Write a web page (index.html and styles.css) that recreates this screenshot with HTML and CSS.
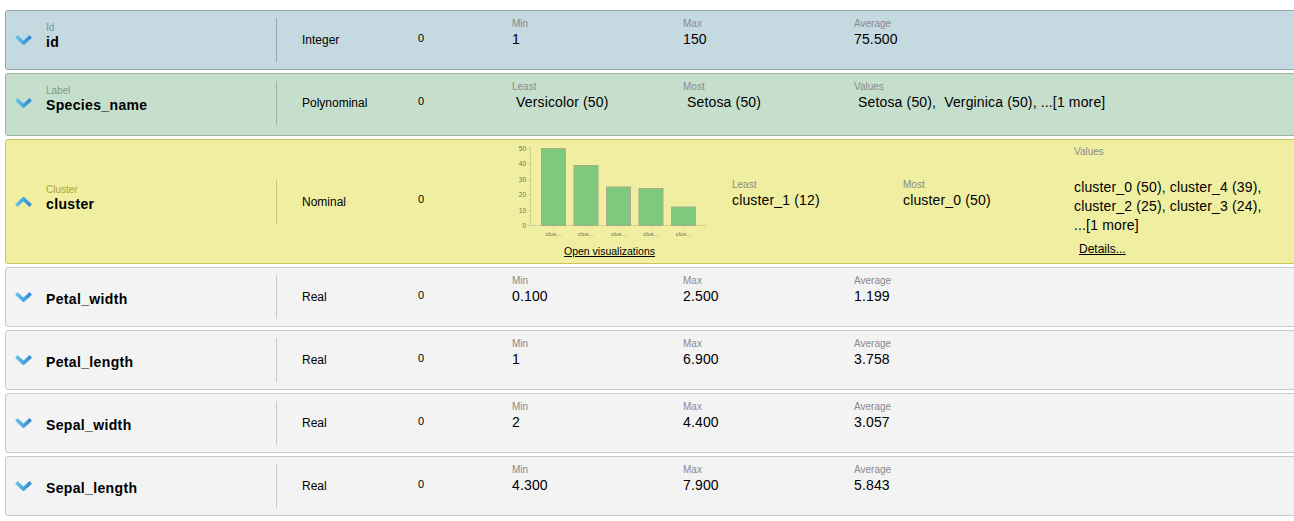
FILE: index.html
```html
<!DOCTYPE html>
<html>
<head>
<meta charset="utf-8">
<title>Attributes</title>
<link rel="stylesheet" href="styles.css">
</head>
<body>
<svg width="0" height="0" class="defs">
  <defs>
    <linearGradient id="chev" x1="0" y1="0" x2="1" y2="0">
      <stop offset="0" stop-color="#6cc0ea"/>
      <stop offset="0.5" stop-color="#45a6de"/>
      <stop offset="1" stop-color="#2a8bd0"/>
    </linearGradient>
  </defs>
</svg>
<div class="list">

  <div class="row row-id">
    <div class="toggle"><svg width="17" height="10" viewBox="0 0 17 10"><path d="M1.3 1.4 L8.5 8 L15.7 1.4" fill="none" stroke="url(#chev)" stroke-width="3.6"/></svg></div>
    <div class="name"><div class="role">Id</div><div class="title">id</div></div>
    <div class="sep"></div>
    <div class="type">Integer</div>
    <div class="missing">0</div>
    <div class="stat"><div class="slabel">Min</div><div class="sval">1</div></div>
    <div class="stat"><div class="slabel">Max</div><div class="sval">150</div></div>
    <div class="stat"><div class="slabel">Average</div><div class="sval">75.500</div></div>
  </div>

  <div class="row row-label">
    <div class="toggle"><svg width="17" height="10" viewBox="0 0 17 10"><path d="M1.3 1.4 L8.5 8 L15.7 1.4" fill="none" stroke="url(#chev)" stroke-width="3.6"/></svg></div>
    <div class="name"><div class="role">Label</div><div class="title">Species_name</div></div>
    <div class="sep"></div>
    <div class="type">Polynominal</div>
    <div class="missing">0</div>
    <div class="stat"><div class="slabel">Least</div><div class="sval pre"> Versicolor (50)</div></div>
    <div class="stat"><div class="slabel">Most</div><div class="sval pre"> Setosa (50)</div></div>
    <div class="stat stat-wide"><div class="slabel">Values</div><div class="sval pre"> Setosa (50),  Verginica (50), ...[1 more]</div></div>
  </div>

  <div class="row row-cluster">
    <div class="toggle"><svg width="17" height="10" viewBox="0 0 17 10"><path d="M1.3 8.6 L8.5 2 L15.7 8.6" fill="none" stroke="url(#chev)" stroke-width="3.6"/></svg></div>
    <div class="name"><div class="role">Cluster</div><div class="title">cluster</div></div>
    <div class="sep"></div>
    <div class="type">Nominal</div>
    <div class="missing">0</div>
    <div class="chartcell">
      <svg class="chart" width="195" height="97" viewBox="0 0 195 97">
        <g class="ticks">
          <line x1="18.5" y1="4" x2="18.5" y2="83"/>
          <line x1="18" y1="82.5" x2="194" y2="82.5"/>
          <line x1="16" y1="5.5" x2="18.5" y2="5.5"/>
          <line x1="16" y1="20.5" x2="18.5" y2="20.5"/>
          <line x1="16" y1="36.5" x2="18.5" y2="36.5"/>
          <line x1="16" y1="51.5" x2="18.5" y2="51.5"/>
          <line x1="16" y1="67.5" x2="18.5" y2="67.5"/>
          <line x1="16" y1="82.5" x2="18.5" y2="82.5"/>
          <line x1="41.5" y1="82.5" x2="41.5" y2="85"/>
          <line x1="74" y1="82.5" x2="74" y2="85"/>
          <line x1="106.5" y1="82.5" x2="106.5" y2="85"/>
          <line x1="139" y1="82.5" x2="139" y2="85"/>
          <line x1="171.5" y1="82.5" x2="171.5" y2="85"/>
        </g>
        <g class="ylab">
          <text x="14" y="7.5">50</text>
          <text x="14" y="22.5">40</text>
          <text x="14" y="38.5">30</text>
          <text x="14" y="53.5">20</text>
          <text x="14" y="69.5">10</text>
          <text x="14" y="84.5">0</text>
        </g>
        <g class="bars">
          <rect x="29.5" y="5.5" width="24" height="77"/>
          <rect x="62" y="22.5" width="24" height="60"/>
          <rect x="94.5" y="44" width="24" height="38.5"/>
          <rect x="127" y="45.5" width="24" height="37"/>
          <rect x="159.5" y="64" width="24" height="18.5"/>
        </g>
        <g class="xlab">
          <text x="41.5" y="93">clus...</text>
          <text x="74" y="93">clus...</text>
          <text x="106.5" y="93">clus...</text>
          <text x="139" y="93">clus...</text>
          <text x="171.5" y="93">clus...</text>
        </g>
      </svg>
      <a class="vislink" href="#">Open visualizations</a>
    </div>
    <div class="stat"><div class="slabel">Least</div><div class="sval">cluster_1 (12)</div></div>
    <div class="stat"><div class="slabel">Most</div><div class="sval">cluster_0 (50)</div></div>
    <div class="values">
      <div class="slabel">Values</div>
      <div class="vlist">cluster_0 (50), cluster_4 (39),<br>cluster_2 (25), cluster_3 (24),<br>...[1 more]</div>
      <div class="detailrow"><a class="details" href="#">Details...</a></div>
    </div>
  </div>

  <div class="row row-plain">
    <div class="toggle"><svg width="17" height="10" viewBox="0 0 17 10"><path d="M1.3 1.4 L8.5 8 L15.7 1.4" fill="none" stroke="url(#chev)" stroke-width="3.6"/></svg></div>
    <div class="name"><div class="role">&nbsp;</div><div class="title">Petal_width</div></div>
    <div class="sep"></div>
    <div class="type">Real</div>
    <div class="missing">0</div>
    <div class="stat"><div class="slabel">Min</div><div class="sval">0.100</div></div>
    <div class="stat"><div class="slabel">Max</div><div class="sval">2.500</div></div>
    <div class="stat"><div class="slabel">Average</div><div class="sval">1.199</div></div>
  </div>

  <div class="row row-plain">
    <div class="toggle"><svg width="17" height="10" viewBox="0 0 17 10"><path d="M1.3 1.4 L8.5 8 L15.7 1.4" fill="none" stroke="url(#chev)" stroke-width="3.6"/></svg></div>
    <div class="name"><div class="role">&nbsp;</div><div class="title">Petal_length</div></div>
    <div class="sep"></div>
    <div class="type">Real</div>
    <div class="missing">0</div>
    <div class="stat"><div class="slabel">Min</div><div class="sval">1</div></div>
    <div class="stat"><div class="slabel">Max</div><div class="sval">6.900</div></div>
    <div class="stat"><div class="slabel">Average</div><div class="sval">3.758</div></div>
  </div>

  <div class="row row-plain">
    <div class="toggle"><svg width="17" height="10" viewBox="0 0 17 10"><path d="M1.3 1.4 L8.5 8 L15.7 1.4" fill="none" stroke="url(#chev)" stroke-width="3.6"/></svg></div>
    <div class="name"><div class="role">&nbsp;</div><div class="title">Sepal_width</div></div>
    <div class="sep"></div>
    <div class="type">Real</div>
    <div class="missing">0</div>
    <div class="stat"><div class="slabel">Min</div><div class="sval">2</div></div>
    <div class="stat"><div class="slabel">Max</div><div class="sval">4.400</div></div>
    <div class="stat"><div class="slabel">Average</div><div class="sval">3.057</div></div>
  </div>

  <div class="row row-plain">
    <div class="toggle"><svg width="17" height="10" viewBox="0 0 17 10"><path d="M1.3 1.4 L8.5 8 L15.7 1.4" fill="none" stroke="url(#chev)" stroke-width="3.6"/></svg></div>
    <div class="name"><div class="role">&nbsp;</div><div class="title">Sepal_length</div></div>
    <div class="sep"></div>
    <div class="type">Real</div>
    <div class="missing">0</div>
    <div class="stat"><div class="slabel">Min</div><div class="sval">4.300</div></div>
    <div class="stat"><div class="slabel">Max</div><div class="sval">7.900</div></div>
    <div class="stat"><div class="slabel">Average</div><div class="sval">5.843</div></div>
  </div>

</div>
</body>
</html>
```

FILE: styles.css
```css
html, body {
  margin: 0;
  padding: 0;
  background: #ffffff;
  overflow: hidden;
}
body {
  font-family: "Liberation Sans", Arial, sans-serif;
  color: #000;
}
.defs {
  position: absolute;
  width: 0;
  height: 0;
}
.list {
  margin: 10px 0 0 5px;
  width: 1300px;
  display: flex;
  flex-direction: column;
  gap: 3px;
}
.row {
  display: flex;
  align-items: center;
  height: 58px;
  border: 1px solid #c9c9c9;
  border-radius: 3px;
  background: #f3f3f3;
  box-sizing: content-box;
}
.row-id {
  background: #c5d9e0;
  border-color: #90a7b0;
}
.row-label {
  height: 58px;
  padding-bottom: 3px;
  background: #c6dfcd;
  border-color: #9db5a2;
}
.row-cluster {
  height: 123px;
  background: #f0efa1;
  border-color: #c9c55c;
}
.toggle {
  width: 31px;
  padding-left: 9px;
  display: flex;
  align-items: center;
}
.toggle svg {
  display: block;
}
.name {
  width: 230px;
  padding-bottom: 7px;
}
.role {
  font-size: 10px;
  line-height: 12px;
  color: #8a8a8a;
}
.row-id .role { color: #7896a2; }
.row-label .role { color: #7f9d84; }
.row-cluster .role { color: #a9a23c; }
.title {
  font-size: 14px;
  line-height: 17px;
  font-weight: bold;
  letter-spacing: 0.35px;
}
.sep {
  width: 1px;
  height: 44px;
  background: #c8c8c8;
}
.row-id .sep { background: #8fa8b1; }
.row-label .sep { background: #9ab59f; }
.row-cluster .sep { background: #c8c36a; }
.type {
  width: 116px;
  padding-left: 25px;
  font-size: 12px;
  line-height: 14px;
}
.missing {
  width: 94px;
  font-size: 11px;
  line-height: 13px;
  padding-bottom: 4px;
}
.stat {
  width: 171px;
  padding-bottom: 14px;
  white-space: nowrap;
}
.row-cluster .stat {
  padding-bottom: 16px;
}
.stat-wide {
  width: 400px;
}
.slabel {
  font-size: 10px;
  line-height: 12px;
  color: #8a8a8a;
}
.sval {
  font-size: 14px;
  line-height: 17px;
  margin-top: 1px;
  letter-spacing: 0.15px;
}
.pre {
  white-space: pre;
}
.chartcell {
  width: 220px;
  display: flex;
  flex-direction: column;
  align-items: flex-start;
  padding-bottom: 2px;
}
.chart {
  display: block;
}
.chart .ticks line {
  stroke: #d4d08e;
  stroke-width: 1;
}
.chart .ylab text {
  font-family: "Liberation Sans", Arial, sans-serif;
  font-size: 6.5px;
  fill: #6e6e5a;
  text-anchor: end;
}
.chart .xlab text {
  font-family: "Liberation Sans", Arial, sans-serif;
  font-size: 6px;
  fill: #6e6e5a;
  text-anchor: middle;
}
.chart .bars rect {
  fill: #7ec97e;
  stroke: #a6ad86;
  stroke-width: 1;
}
.vislink {
  width: 195px;
  text-align: center;
  margin-top: 5px;
  font-size: 10.5px;
  line-height: 13px;
  color: #000;
  text-decoration: underline;
}
.values {
  width: 220px;
  white-space: nowrap;
  padding-bottom: 2px;
}
.vlist {
  margin-top: 20px;
  font-size: 14px;
  line-height: 19px;
  letter-spacing: 0.15px;
}
.detailrow {
  margin-top: 6px;
  padding-left: 5px;
  line-height: 13px;
}
.details {
  font-size: 12px;
  color: #000;
  text-decoration: underline;
}
```
